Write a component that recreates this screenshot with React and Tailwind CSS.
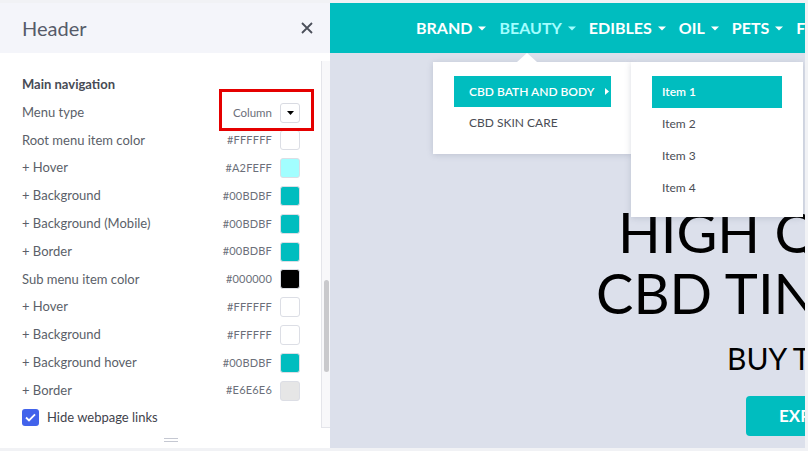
import { useState } from "react";

const rows = [
  { label: "Root menu item color", hex: "#FFFFFF", color: "#ffffff" },
  { label: "+ Hover", hex: "#A2FEFF", color: "#a2feff" },
  { label: "+ Background", hex: "#00BDBF", color: "#00bdbf" },
  { label: "+ Background (Mobile)", hex: "#00BDBF", color: "#00bdbf" },
  { label: "+ Border", hex: "#00BDBF", color: "#00bdbf" },
  { label: "Sub menu item color", hex: "#000000", color: "#000000" },
  { label: "+ Hover", hex: "#FFFFFF", color: "#ffffff" },
  { label: "+ Background", hex: "#FFFFFF", color: "#ffffff" },
  { label: "+ Background hover", hex: "#00BDBF", color: "#00bdbf" },
  { label: "+ Border", hex: "#E6E6E6", color: "#e6e6e6" },
];

const navItems = ["BRAND", "BEAUTY", "EDIBLES", "OIL", "PETS"];

function Caret({ className }) {
  return (
    <svg width="8" height="5" viewBox="0 0 8 5" className={className}>
      <path d="M0 0.5h8L4 4.5z" fill="currentColor" />
    </svg>
  );
}

function Sidebar() {
  const [hideLinks, setHideLinks] = useState(true);

  return (
    <aside className="w-[330px] shrink-0 flex flex-col bg-white">
      <div className="h-[50px] bg-[#f4f5fa] flex items-center justify-between pl-[22px] pr-[17px]">
        <h1 className="text-[20px] text-[#565b69] leading-none">Header</h1>
        <svg width="12" height="12" viewBox="0 0 12 12" className="text-[#4b4f5a]">
          <path d="M1 1l10 10M11 1L1 11" stroke="currentColor" strokeWidth="1.8" />
        </svg>
      </div>

      <div className="relative flex-1 flex">
        <div className="flex-1 pl-[22px] pr-[21px] pt-[18px]">
          <div className="h-[28px] flex items-center text-[13px] font-bold text-[#474b55]">
            Main navigation
          </div>
          <div className="h-[27.5px] flex items-center justify-between text-[13px] text-[#5b5f69]">
            <span>Menu type</span>
            <div className="flex items-center gap-[8px]">
              <span className="text-[11.5px] text-[#6b6f7a]">Column</span>
              <button className="w-[20px] h-[20px] border border-[#d9dbe2] rounded-[3px] flex items-center justify-center text-black">
                <svg width="7" height="4" viewBox="0 0 7 4">
                  <path d="M0 0h7L3.5 4z" fill="currentColor" />
                </svg>
              </button>
            </div>
          </div>
          {rows.map((row, i) => (
            <div key={i} className="h-[27.8px] flex items-center justify-between text-[13px] text-[#5b5f69]">
              <span>{row.label}</span>
              <div className="flex items-center gap-[8px]">
                <span className="text-[11px] text-[#6b6f7a] tracking-[0.2px]">{row.hex}</span>
                <span
                  className="w-[20px] h-[20px] rounded-[3px] border border-[#dcdee5]"
                  style={{ backgroundColor: row.color }}
                />
              </div>
            </div>
          ))}
          <label className="h-[26px] flex items-center gap-[8px] text-[13px] text-[#3f434c]">
            <button
              onClick={() => setHideLinks(!hideLinks)}
              className="w-[17px] h-[17px] rounded-[3px] bg-[#4263eb] flex items-center justify-center"
            >
              {hideLinks && (
                <svg width="11" height="9" viewBox="0 0 11 9">
                  <path d="M1 4.5l3 3L10 1.3" stroke="white" strokeWidth="1.8" fill="none" />
                </svg>
              )}
            </button>
            Hide webpage links
          </label>
          <div className="flex justify-center pt-[8px] pl-[20px]">
            <div className="w-[14px] flex flex-col gap-[2px]">
              <div className="h-px bg-[#c5c8d2]" />
              <div className="h-px bg-[#c5c8d2]" />
            </div>
          </div>
        </div>

        {/* scrollbar */}
        <div className="w-[9px] mt-[8px] mb-[20px] bg-[#f8f8fa] border-l border-b border-[#e4e5ea] pt-[219px]">
          <div className="ml-[2px] w-[5px] h-[92px] rounded-full bg-[#c9c9cc]" />
        </div>

        {/* annotation */}
        <div className="absolute left-[219px] top-[36px] w-[95px] h-[42px] border-[3px] border-[#e50000]" />
      </div>
    </aside>
  );
}

function Preview() {
  return (
    <main className="relative w-[475px] shrink-0 bg-[#dce0eb] overflow-hidden">
      <nav className="h-[50px] bg-[#00bdbf] flex items-center pl-[86px] gap-[13px] whitespace-nowrap">
        {navItems.map((item) => {
          const active = item === "BEAUTY";
          return (
            <div
              key={item}
              className={`flex items-center gap-[6px] text-[16px] font-bold ${active ? "text-[#a2feff]" : "text-white"}`}
            >
              <span>{item}</span>
              <Caret />
            </div>
          );
        })}
        <span className="text-[16px] font-bold text-white">F</span>
      </nav>

      <div className="whitespace-nowrap text-black font-normal">
        <div className="pt-[148px] pl-[288px] text-[56px] leading-[61px]">HIGH QUALITY</div>
        <div className="pl-[266px] text-[56px] leading-[61px]">CBD TINCTURES</div>
        <div className="pt-[15px] pl-[397px] text-[30px] leading-[40px]">BUY THE BEST</div>
        <div className="pt-[18px] pl-[416px]">
          <button className="h-[40px] px-[33px] rounded-[4px] bg-[#00bdbf] text-white text-[17px] font-bold">
            EXPLORE
          </button>
        </div>
      </div>

      {/* dropdown: level 1 */}
      <div className="absolute left-[103px] top-[59px] w-[199px] h-[92px] bg-white shadow-[0_1px_6px_rgba(80,90,120,0.22)] px-[21px] py-[14px]">
        <div className="absolute -top-[9px] left-[84px] w-0 h-0 border-l-[10px] border-r-[10px] border-b-[9px] border-l-transparent border-r-transparent border-b-white" />
        <div className="h-[31px] bg-[#00bdbf] flex items-center justify-between pl-[15px] pr-[2px] text-[12px] font-semibold text-white">
          <span>CBD BATH AND BODY</span>
          <svg width="4" height="7" viewBox="0 0 4 7">
            <path d="M0 0l4 3.5L0 7z" fill="white" />
          </svg>
        </div>
        <div className="h-[32px] flex items-center pl-[15px] text-[12px] text-[#4a4d55]">CBD SKIN CARE</div>
      </div>

      {/* dropdown: level 2 */}
      <div className="absolute left-[301px] top-[59px] w-[172px] h-[155px] bg-white shadow-[0_1px_6px_rgba(80,90,120,0.22)] px-[21px] py-[14px]">
        {["Item 1", "Item 2", "Item 3", "Item 4"].map((item, i) => (
          <div
            key={item}
            className={`h-[32px] flex items-center pl-[10px] text-[12px] ${i === 0 ? "bg-[#00bdbf] text-white font-semibold" : "text-[#4a4d55]"}`}
          >
            {item}
          </div>
        ))}
      </div>
    </main>
  );
}

export default function App() {
  return (
    <div
      className="w-[808px] h-[451px] flex pt-[3px] pb-[3px] bg-[#f1f2f5] overflow-hidden"
      style={{ fontFamily: "Lato, 'Open Sans', sans-serif" }}
    >
      <Sidebar />
      <Preview />
    </div>
  );
}
